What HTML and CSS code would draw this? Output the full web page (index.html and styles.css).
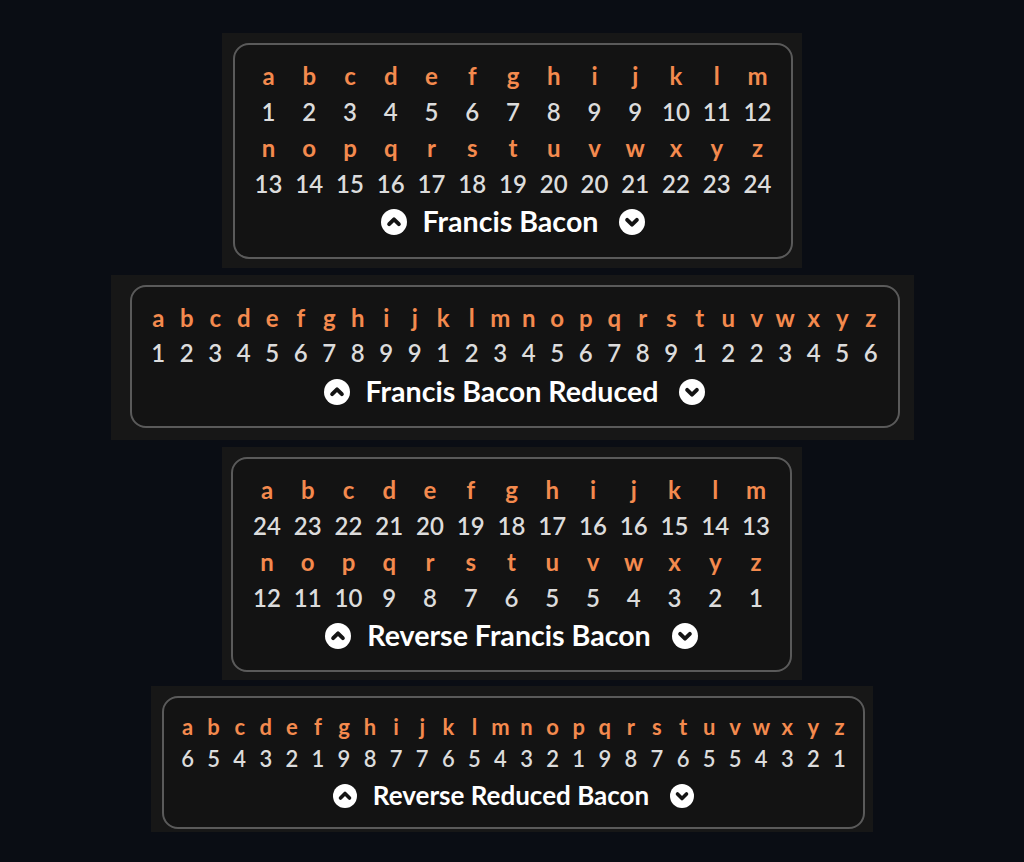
FILE: index.html
```html
<!DOCTYPE html>
<html>
<head>
<meta charset="utf-8">
<link rel="stylesheet" href="styles.css">
</head>
<body>
<main class="stack">

  <section class="panel panel-1">
    <div class="box">
      <div class="grid cols-13">
        <span class="l">a</span><span class="l">b</span><span class="l">c</span><span class="l">d</span><span class="l">e</span><span class="l">f</span><span class="l">g</span><span class="l">h</span><span class="l">i</span><span class="l">j</span><span class="l">k</span><span class="l">l</span><span class="l">m</span>
        <span class="n">1</span><span class="n">2</span><span class="n">3</span><span class="n">4</span><span class="n">5</span><span class="n">6</span><span class="n">7</span><span class="n">8</span><span class="n">9</span><span class="n">9</span><span class="n">10</span><span class="n">11</span><span class="n">12</span>
        <span class="l">n</span><span class="l">o</span><span class="l">p</span><span class="l">q</span><span class="l">r</span><span class="l">s</span><span class="l">t</span><span class="l">u</span><span class="l">v</span><span class="l">w</span><span class="l">x</span><span class="l">y</span><span class="l">z</span>
        <span class="n">13</span><span class="n">14</span><span class="n">15</span><span class="n">16</span><span class="n">17</span><span class="n">18</span><span class="n">19</span><span class="n">20</span><span class="n">20</span><span class="n">21</span><span class="n">22</span><span class="n">23</span><span class="n">24</span>
      </div>
      <div class="title">
        <svg class="ico" viewBox="0 0 24 24"><circle cx="12" cy="12" r="12" fill="#fff"/><polyline points="7.5,14 12,9.5 16.5,14" fill="none" stroke="#141414" stroke-width="3.6" stroke-linecap="round" stroke-linejoin="round"/></svg>
        <span class="name">Francis Bacon</span>
        <svg class="ico" viewBox="0 0 24 24"><circle cx="12" cy="12" r="12" fill="#fff"/><polyline points="7.5,10 12,14.5 16.5,10" fill="none" stroke="#141414" stroke-width="3.6" stroke-linecap="round" stroke-linejoin="round"/></svg>
      </div>
    </div>
  </section>

  <section class="panel panel-2">
    <div class="box">
      <div class="grid cols-26">
        <span class="l">a</span><span class="l">b</span><span class="l">c</span><span class="l">d</span><span class="l">e</span><span class="l">f</span><span class="l">g</span><span class="l">h</span><span class="l">i</span><span class="l">j</span><span class="l">k</span><span class="l">l</span><span class="l">m</span><span class="l">n</span><span class="l">o</span><span class="l">p</span><span class="l">q</span><span class="l">r</span><span class="l">s</span><span class="l">t</span><span class="l">u</span><span class="l">v</span><span class="l">w</span><span class="l">x</span><span class="l">y</span><span class="l">z</span>
        <span class="n">1</span><span class="n">2</span><span class="n">3</span><span class="n">4</span><span class="n">5</span><span class="n">6</span><span class="n">7</span><span class="n">8</span><span class="n">9</span><span class="n">9</span><span class="n">1</span><span class="n">2</span><span class="n">3</span><span class="n">4</span><span class="n">5</span><span class="n">6</span><span class="n">7</span><span class="n">8</span><span class="n">9</span><span class="n">1</span><span class="n">2</span><span class="n">2</span><span class="n">3</span><span class="n">4</span><span class="n">5</span><span class="n">6</span>
      </div>
      <div class="title">
        <svg class="ico" viewBox="0 0 24 24"><circle cx="12" cy="12" r="12" fill="#fff"/><polyline points="7.5,14 12,9.5 16.5,14" fill="none" stroke="#141414" stroke-width="3.6" stroke-linecap="round" stroke-linejoin="round"/></svg>
        <span class="name">Francis Bacon Reduced</span>
        <svg class="ico" viewBox="0 0 24 24"><circle cx="12" cy="12" r="12" fill="#fff"/><polyline points="7.5,10 12,14.5 16.5,10" fill="none" stroke="#141414" stroke-width="3.6" stroke-linecap="round" stroke-linejoin="round"/></svg>
      </div>
    </div>
  </section>

  <section class="panel panel-3">
    <div class="box">
      <div class="grid cols-13">
        <span class="l">a</span><span class="l">b</span><span class="l">c</span><span class="l">d</span><span class="l">e</span><span class="l">f</span><span class="l">g</span><span class="l">h</span><span class="l">i</span><span class="l">j</span><span class="l">k</span><span class="l">l</span><span class="l">m</span>
        <span class="n">24</span><span class="n">23</span><span class="n">22</span><span class="n">21</span><span class="n">20</span><span class="n">19</span><span class="n">18</span><span class="n">17</span><span class="n">16</span><span class="n">16</span><span class="n">15</span><span class="n">14</span><span class="n">13</span>
        <span class="l">n</span><span class="l">o</span><span class="l">p</span><span class="l">q</span><span class="l">r</span><span class="l">s</span><span class="l">t</span><span class="l">u</span><span class="l">v</span><span class="l">w</span><span class="l">x</span><span class="l">y</span><span class="l">z</span>
        <span class="n">12</span><span class="n">11</span><span class="n">10</span><span class="n">9</span><span class="n">8</span><span class="n">7</span><span class="n">6</span><span class="n">5</span><span class="n">5</span><span class="n">4</span><span class="n">3</span><span class="n">2</span><span class="n">1</span>
      </div>
      <div class="title">
        <svg class="ico" viewBox="0 0 24 24"><circle cx="12" cy="12" r="12" fill="#fff"/><polyline points="7.5,14 12,9.5 16.5,14" fill="none" stroke="#141414" stroke-width="3.6" stroke-linecap="round" stroke-linejoin="round"/></svg>
        <span class="name">Reverse Francis Bacon</span>
        <svg class="ico" viewBox="0 0 24 24"><circle cx="12" cy="12" r="12" fill="#fff"/><polyline points="7.5,10 12,14.5 16.5,10" fill="none" stroke="#141414" stroke-width="3.6" stroke-linecap="round" stroke-linejoin="round"/></svg>
      </div>
    </div>
  </section>

  <section class="panel panel-4">
    <div class="box">
      <div class="grid cols-26">
        <span class="l">a</span><span class="l">b</span><span class="l">c</span><span class="l">d</span><span class="l">e</span><span class="l">f</span><span class="l">g</span><span class="l">h</span><span class="l">i</span><span class="l">j</span><span class="l">k</span><span class="l">l</span><span class="l">m</span><span class="l">n</span><span class="l">o</span><span class="l">p</span><span class="l">q</span><span class="l">r</span><span class="l">s</span><span class="l">t</span><span class="l">u</span><span class="l">v</span><span class="l">w</span><span class="l">x</span><span class="l">y</span><span class="l">z</span>
        <span class="n">6</span><span class="n">5</span><span class="n">4</span><span class="n">3</span><span class="n">2</span><span class="n">1</span><span class="n">9</span><span class="n">8</span><span class="n">7</span><span class="n">7</span><span class="n">6</span><span class="n">5</span><span class="n">4</span><span class="n">3</span><span class="n">2</span><span class="n">1</span><span class="n">9</span><span class="n">8</span><span class="n">7</span><span class="n">6</span><span class="n">5</span><span class="n">5</span><span class="n">4</span><span class="n">3</span><span class="n">2</span><span class="n">1</span>
      </div>
      <div class="title">
        <svg class="ico" viewBox="0 0 24 24"><circle cx="12" cy="12" r="12" fill="#fff"/><polyline points="7.5,14 12,9.5 16.5,14" fill="none" stroke="#141414" stroke-width="3.6" stroke-linecap="round" stroke-linejoin="round"/></svg>
        <span class="name">Reverse Reduced Bacon</span>
        <svg class="ico" viewBox="0 0 24 24"><circle cx="12" cy="12" r="12" fill="#fff"/><polyline points="7.5,10 12,14.5 16.5,10" fill="none" stroke="#141414" stroke-width="3.6" stroke-linecap="round" stroke-linejoin="round"/></svg>
      </div>
    </div>
  </section>

</main>
</body>
</html>
```

FILE: styles.css
```css
html, body {
  margin: 0;
  padding: 0;
}

body {
  background: #0a0d14;
  font-family: Lato, "Noto Sans", "Liberation Sans", sans-serif;
  height: 862px;
  overflow: hidden;
}

.stack {
  display: flex;
  flex-direction: column;
  align-items: center;
  gap: 7px;
  padding-top: 33px;
}

.panel {
  background: #171717;
  box-sizing: border-box;
}

.box {
  border: 2px solid #5a5a5a;
  border-radius: 16px;
  background: #131313;
  padding-top: 13px;
}

.grid {
  display: grid;
  justify-content: center;
  text-align: center;
}

.cols-13 {
  grid-template-columns: repeat(13, 40.75px);
  grid-auto-rows: 36px;
  line-height: 36px;
  font-size: 24px;
}

.cols-26 {
  grid-template-columns: repeat(26, 28.5px);
  grid-auto-rows: 35px;
  line-height: 35px;
  font-size: 24px;
}

.l {
  color: #f48a4e;
  font-weight: 700;
}

.n {
  color: #dcdcdc;
  font-weight: 600;
}

.title {
  display: flex;
  align-items: center;
  justify-content: center;
  height: 40px;
}

.name {
  color: #ffffff;
  font-weight: 700;
  font-size: 28.6px;
  line-height: 40px;
  margin: 0 21px 0 16px;
  position: relative;
  top: -1px;
}

.ico {
  width: 26px;
  height: 26px;
  display: block;
}

/* panel 1 */
.panel-1 {
  width: 580px;
  padding: 10px 9px 9px 11px;
}
.panel-1 .box { padding-bottom: 15px; }

/* panel 2 */
.panel-2 {
  width: 803px;
  padding: 10px 14px 12px 19px;
}
.panel-2 .title { margin-top: 2px; }
.panel-2 .box { padding-bottom: 14px; }

/* panel 3 */
.panel-3 {
  width: 580px;
  padding: 10px 10px 8px 9px;
}
.panel-3 .box { padding-bottom: 14px; }

/* panel 4 */
.panel-4 {
  width: 722px;
  padding: 10px 8px 3px 11px;
  margin-top: -1px;
}
.panel-4 .cols-26 {
  grid-template-columns: repeat(26, 26.08px);
  grid-auto-rows: 32px;
  line-height: 32px;
  font-size: 22px;
}
.panel-4 .title { margin-top: 1px; }
.panel-4 .box { padding-bottom: 11px; }
.panel-4 .name { font-size: 26px; }
.panel-4 .ico { width: 24px; height: 24px; }
```
